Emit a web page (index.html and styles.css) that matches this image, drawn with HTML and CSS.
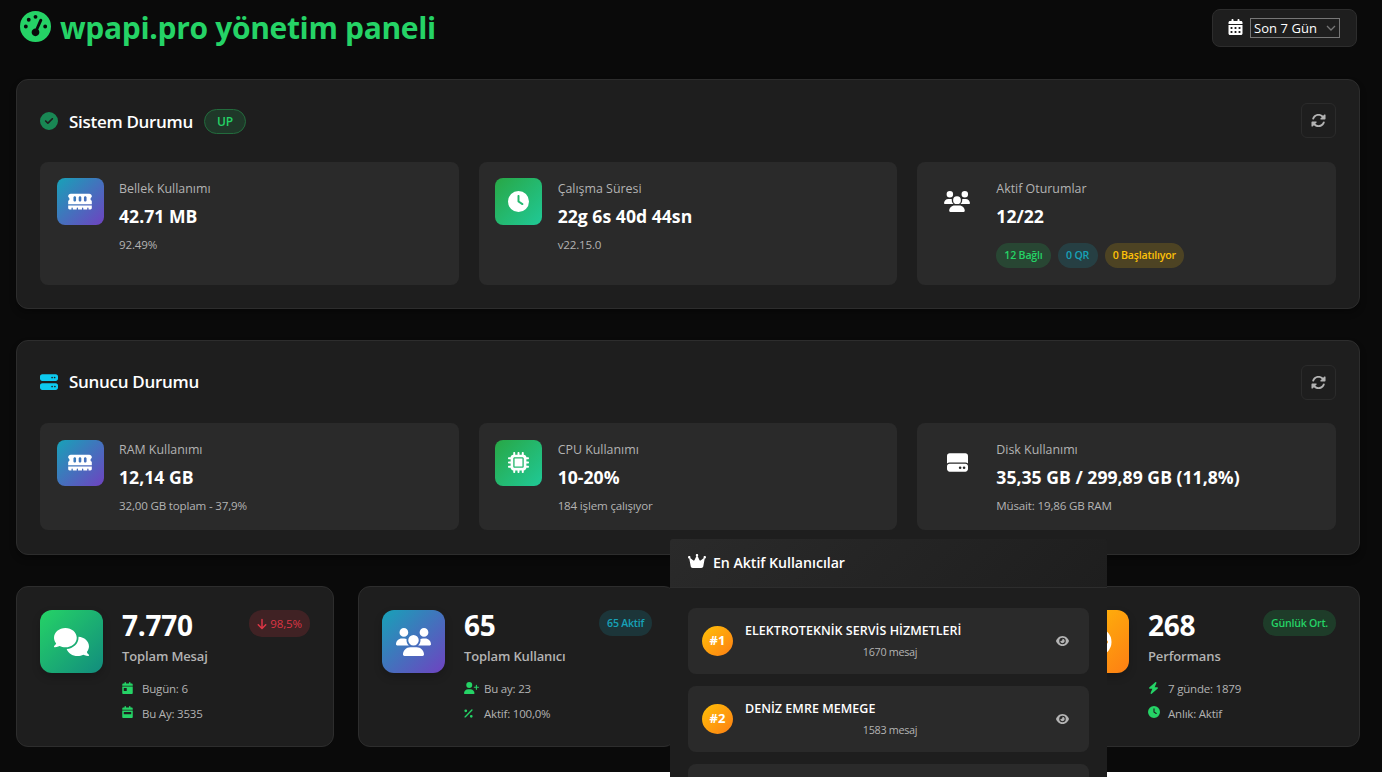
FILE: index.html
```
<!DOCTYPE html>
<html lang="tr">
<head>
<meta charset="utf-8">
<title>wpapi.pro yönetim paneli</title>
<link rel="stylesheet" href="styles.css">
</head>
<body>
<svg class="sprite" aria-hidden="true">
  <symbol id="gauge" viewBox="0 0 512 512"><path d="M0 256a256 256 0 1 1 512 0A256 256 0 1 1 0 256zM288 96a32 32 0 1 0 -64 0 32 32 0 1 0 64 0zM256 416c35.3 0 64-28.7 64-64c0-17.4-6.9-33.1-18.1-44.6L366 161.7c5.3-12.1-.2-26.3-12.3-31.6s-26.3 .2-31.6 12.3L257.9 288c-.6 0-1.3 0-1.9 0c-35.3 0-64 28.7-64 64s28.7 64 64 64zM176 144a32 32 0 1 0 -64 0 32 32 0 1 0 64 0zM96 288a32 32 0 1 0 0-64 32 32 0 1 0 0 64zm352-32a32 32 0 1 0 -64 0 32 32 0 1 0 64 0z"/></symbol>
  <symbol id="calendar" viewBox="0 0 448 512"><path d="M128 0c17.7 0 32 14.3 32 32V64H288V32c0-17.7 14.3-32 32-32s32 14.3 32 32V64h48c26.5 0 48 21.5 48 48v48H0V112C0 85.5 21.5 64 48 64H96V32c0-17.7 14.3-32 32-32zM0 192H448V464c0 26.5-21.5 48-48 48H48c-26.5 0-48-21.5-48-48V192zm64 80v32c0 8.8 7.2 16 16 16h32c8.8 0 16-7.2 16-16V272c0-8.8-7.2-16-16-16H80c-8.8 0-16 7.2-16 16zm128 0v32c0 8.8 7.2 16 16 16h32c8.8 0 16-7.2 16-16V272c0-8.8-7.2-16-16-16H208c-8.8 0-16 7.2-16 16zm144-16c-8.8 0-16 7.2-16 16v32c0 8.8 7.2 16 16 16h32c8.8 0 16-7.2 16-16V272c0-8.8-7.2-16-16-16H336zM64 400v32c0 8.8 7.2 16 16 16h32c8.8 0 16-7.2 16-16V400c0-8.8-7.2-16-16-16H80c-8.8 0-16 7.2-16 16zm144-16c-8.8 0-16 7.2-16 16v32c0 8.8 7.2 16 16 16h32c8.8 0 16-7.2 16-16V400c0-8.8-7.2-16-16-16H208zm112 16v32c0 8.8 7.2 16 16 16h32c8.8 0 16-7.2 16-16V400c0-8.8-7.2-16-16-16H336c-8.8 0-16 7.2-16 16z"/></symbol>
  <symbol id="calendar-day" viewBox="0 0 448 512"><path d="M128 0c17.7 0 32 14.3 32 32V64H288V32c0-17.7 14.3-32 32-32s32 14.3 32 32V64h48c26.5 0 48 21.5 48 48v48H0V112C0 85.5 21.5 64 48 64H96V32c0-17.7 14.3-32 32-32zM0 192H448V464c0 26.5-21.5 48-48 48H48c-26.5 0-48-21.5-48-48V192zm80 64c-8.8 0-16 7.2-16 16v96c0 8.8 7.2 16 16 16h96c8.8 0 16-7.2 16-16V272c0-8.8-7.2-16-16-16H80z"/></symbol>
  <symbol id="calendar-week" viewBox="0 0 448 512"><path d="M128 0c17.7 0 32 14.3 32 32V64H288V32c0-17.7 14.3-32 32-32s32 14.3 32 32V64h48c26.5 0 48 21.5 48 48v48H0V112C0 85.5 21.5 64 48 64H96V32c0-17.7 14.3-32 32-32zM0 192H448V464c0 26.5-21.5 48-48 48H48c-26.5 0-48-21.5-48-48V192zm80 64c-8.8 0-16 7.2-16 16v64c0 8.8 7.2 16 16 16H368c8.8 0 16-7.2 16-16V272c0-8.8-7.2-16-16-16H80z"/></symbol>
  <symbol id="check" viewBox="0 0 512 512"><path d="M256 512A256 256 0 1 0 256 0a256 256 0 1 0 0 512zM369 209L241 337c-9.4 9.4-24.6 9.4-33.9 0l-64-64c-9.4-9.4-9.4-24.6 0-33.9s24.6-9.4 33.9 0l47 47L335 175c9.4-9.4 24.6-9.4 33.9 0s9.4 24.6 0 33.9z"/></symbol>
  <symbol id="rotate" viewBox="0 0 512 512"><path d="M142.9 142.9c62.2-62.2 162.7-62.5 225.3-1L327 183c-6.9 6.9-8.9 17.2-5.2 26.2s12.5 14.8 22.2 14.8H472c13.3 0 24-10.7 24-24V72c0-9.7-5.8-18.5-14.8-22.2s-19.3-1.7-26.2 5.2L413.4 96.6c-87.6-86.5-228.7-86.2-315.8 1C73.2 122 55.6 150.7 44.8 181.4c-5.9 16.7 2.9 34.9 19.5 40.8s34.9-2.9 40.8-19.5c7.7-21.8 20.2-42.3 37.8-59.8zM16 312v128c0 9.7 5.8 18.5 14.8 22.2s19.3 1.7 26.2-5.2l41.6-41.6c87.6 86.5 228.7 86.2 315.8-1c24.4-24.4 42.1-53.1 52.9-83.7c5.9-16.7-2.9-34.9-19.5-40.8s-34.9 2.9-40.8 19.5c-7.7 21.8-20.2 42.3-37.8 59.8c-62.2 62.2-162.7 62.5-225.3 1L185 329c6.9-6.9 8.9-17.2 5.2-26.2s-12.5-14.8-22.2-14.8H40c-13.3 0-24 10.7-24 24z"/></symbol>
  <symbol id="memory" viewBox="0 0 576 512"><path d="M64 64C28.7 64 0 92.7 0 128v7.4c0 6.8 4.4 12.6 10.1 16.3C23.3 160.3 32 175.1 32 192s-8.7 31.7-21.9 40.3C4.4 236 0 241.8 0 248.6V320H576V248.6c0-6.8-4.4-12.6-10.1-16.3C552.7 223.7 544 208.9 544 192s8.7-31.7 21.9-40.3c5.7-3.7 10.1-9.5 10.1-16.3V128c0-35.3-28.7-64-64-64H64zM576 352H0v64c0 17.7 14.3 32 32 32H80V416c0-8.8 7.2-16 16-16s16 7.2 16 16v32h96V416c0-8.8 7.2-16 16-16s16 7.2 16 16v32h96V416c0-8.8 7.2-16 16-16s16 7.2 16 16v32h96V416c0-8.8 7.2-16 16-16s16 7.2 16 16v32h48c17.7 0 32-14.3 32-32V352zM192 160v64c0 17.7-14.3 32-32 32s-32-14.3-32-32V160c0-17.7 14.3-32 32-32s32 14.3 32 32zm128 0v64c0 17.7-14.3 32-32 32s-32-14.3-32-32V160c0-17.7 14.3-32 32-32s32 14.3 32 32zm128 0v64c0 17.7-14.3 32-32 32s-32-14.3-32-32V160c0-17.7 14.3-32 32-32s32 14.3 32 32z"/></symbol>
  <symbol id="clock" viewBox="0 0 512 512"><path d="M256 0a256 256 0 1 1 0 512A256 256 0 1 1 256 0zM232 120V256c0 8 4 15.5 10.7 20l96 64c11 7.4 25.9 4.4 33.3-6.7s4.4-25.9-6.7-33.3L280 243.2V120c0-13.3-10.7-24-24-24s-24 10.7-24 24z"/></symbol>
  <symbol id="users" viewBox="0 0 640 512"><path d="M144 0a80 80 0 1 1 0 160A80 80 0 1 1 144 0zM512 0a80 80 0 1 1 0 160A80 80 0 1 1 512 0zM0 298.7C0 239.8 47.8 192 106.7 192h42.7c15.9 0 31 3.5 44.6 9.7c-1.3 7.2-1.9 14.7-1.9 22.3c0 38.2 16.8 72.5 43.3 96c-.2 0-.4 0-.7 0H21.3C9.6 320 0 310.4 0 298.7zM405.3 320c-.2 0-.4 0-.7 0c26.6-23.5 43.3-57.8 43.3-96c0-7.6-.7-15-1.9-22.3c13.6-6.3 28.7-9.7 44.6-9.7h42.7C592.2 192 640 239.8 640 298.7c0 11.8-9.6 21.3-21.3 21.3H405.3zM224 224a96 96 0 1 1 192 0 96 96 0 1 1 -192 0zM128 485.3C128 411.7 187.7 352 261.3 352H378.7C452.3 352 512 411.7 512 485.3c0 14.7-11.9 26.7-26.7 26.7H154.7c-14.7 0-26.7-11.9-26.7-26.7z"/></symbol>
  <symbol id="server" viewBox="0 0 512 512"><path d="M64 32C28.7 32 0 60.7 0 96v64c0 35.3 28.7 64 64 64H448c35.3 0 64-28.7 64-64V96c0-35.3-28.7-64-64-64H64zm280 72a24 24 0 1 1 0 48 24 24 0 1 1 0-48zm48 24a24 24 0 1 1 48 0 24 24 0 1 1 -48 0zM64 288c-35.3 0-64 28.7-64 64v64c0 35.3 28.7 64 64 64H448c35.3 0 64-28.7 64-64V352c0-35.3-28.7-64-64-64H64zm280 72a24 24 0 1 1 0 48 24 24 0 1 1 0-48zm56 24a24 24 0 1 1 48 0 24 24 0 1 1 -48 0z"/></symbol>
  <symbol id="chip" viewBox="0 0 512 512"><path d="M176 24c0-13.3-10.7-24-24-24s-24 10.7-24 24V64c-35.3 0-64 28.7-64 64H24c-13.3 0-24 10.7-24 24s10.7 24 24 24H64v56H24c-13.3 0-24 10.7-24 24s10.7 24 24 24H64v56H24c-13.3 0-24 10.7-24 24s10.7 24 24 24H64c0 35.3 28.7 64 64 64v40c0 13.3 10.7 24 24 24s24-10.7 24-24V448h56v40c0 13.3 10.7 24 24 24s24-10.7 24-24V448h56v40c0 13.3 10.7 24 24 24s24-10.7 24-24V448c35.3 0 64-28.7 64-64h40c13.3 0 24-10.7 24-24s-10.7-24-24-24H448V280h40c13.3 0 24-10.7 24-24s-10.7-24-24-24H448V176h40c13.3 0 24-10.7 24-24s-10.7-24-24-24H448c0-35.3-28.7-64-64-64V24c0-13.3-10.7-24-24-24s-24 10.7-24 24V64H280V24c0-13.3-10.7-24-24-24s-24 10.7-24 24V64H176V24zM160 128H352c17.7 0 32 14.3 32 32V352c0 17.7-14.3 32-32 32H160c-17.7 0-32-14.3-32-32V160c0-17.7 14.3-32 32-32zm192 32H160V352H352V160z"/></symbol>
  <symbol id="disk" viewBox="0 0 512 512"><path d="M0 96C0 60.7 28.7 32 64 32H448c35.3 0 64 28.7 64 64V280.4c-17-15.2-39.4-24.4-64-24.4H64c-24.6 0-47 9.2-64 24.4V96zM64 288H448c35.3 0 64 28.7 64 64v64c0 35.3-28.7 64-64 64H64c-35.3 0-64-28.7-64-64V352c0-35.3 28.7-64 64-64zM320 416a32 32 0 1 0 0-64 32 32 0 1 0 0 64zm128-32a32 32 0 1 0 -64 0 32 32 0 1 0 64 0z"/></symbol>
  <symbol id="comments" viewBox="0 0 640 512"><path d="M208 352c114.9 0 208-78.8 208-176S322.9 0 208 0S0 78.8 0 176c0 38.6 14.7 74.3 39.6 103.4c-3.5 9.4-8.7 17.7-14.2 24.7c-4.8 6.2-9.7 11-13.3 14.3c-1.8 1.6-3.3 2.9-4.3 3.7c-.5 .4-.9 .7-1.1 .8l-.2 .2C1 327.2-1.4 334.4 .8 340.9S9.1 352 16 352c21.8 0 43.8-5.6 62.1-12.5c9.2-3.5 17.8-7.4 25.2-11.4C134.1 343.3 169.8 352 208 352zM448 176c0 112.3-99.1 196.9-216.5 207C255.8 457.4 336.4 512 432 512c38.2 0 73.9-8.7 104.7-23.9c7.5 4 16 7.9 25.2 11.4c18.3 6.9 40.3 12.5 62.1 12.5c6.9 0 13.1-4.5 15.2-11.1c2.1-6.6-.2-13.8-5.8-17.9l-.2-.2c-.2-.2-.6-.4-1.1-.8c-1-.8-2.5-2-4.3-3.7c-3.6-3.3-8.5-8.1-13.3-14.3c-5.5-7-10.7-15.4-14.2-24.7c24.9-29 39.6-64.7 39.6-103.4c0-92.8-84.9-168.9-192.6-175.5c.4 5.1 .6 10.3 .6 15.5z"/></symbol>
  <symbol id="user-plus" viewBox="0 0 640 512"><path d="M96 128a128 128 0 1 1 256 0A128 128 0 1 1 96 128zM0 482.3C0 383.8 79.8 304 178.3 304h91.4C368.2 304 448 383.8 448 482.3c0 16.4-13.3 29.7-29.7 29.7H29.7C13.3 512 0 498.7 0 482.3zM504 312V248H440c-13.3 0-24-10.7-24-24s10.7-24 24-24h64V136c0-13.3 10.7-24 24-24s24 10.7 24 24v64h64c13.3 0 24 10.7 24 24s-10.7 24-24 24H552v64c0 13.3-10.7 24-24 24s-24-10.7-24-24z"/></symbol>
  <symbol id="percent" viewBox="0 0 384 512"><path d="M374.6 118.6c12.5-12.5 12.5-32.8 0-45.3s-32.8-12.5-45.3 0l-320 320c-12.5 12.5-12.5 32.8 0 45.3s32.8 12.5 45.3 0l320-320zM128 128A64 64 0 1 0 0 128a64 64 0 1 0 128 0zM384 384a64 64 0 1 0 -128 0 64 64 0 1 0 128 0z"/></symbol>
  <symbol id="bolt" viewBox="0 0 448 512"><path d="M349.4 44.6c5.9-13.7 1.5-29.7-10.6-38.5s-28.6-8-39.9 1.8l-256 224c-10 8.8-13.6 22.9-8.9 35.3S50.7 288 64 288H175.5L98.6 467.4c-5.9 13.7-1.5 29.7 10.6 38.5s28.6 8 39.9-1.8l256-224c10-8.8 13.6-22.9 8.9-35.3s-16.6-20.7-30-20.7H272.5L349.4 44.6z"/></symbol>
  <symbol id="crown" viewBox="0 0 576 512"><path d="M309 106c11.4-7 19-19.7 19-34c0-22.1-17.9-40-40-40s-40 17.9-40 40c0 14.4 7.6 27 19 34L209.7 220.6c-9.1 18.2-32.7 23.4-48.6 10.7L72 160c5-6.7 8-15 8-24c0-22.1-17.9-40-40-40S0 113.9 0 136s17.9 40 40 40c.2 0 .5 0 .7 0L86.4 427.4c5.5 30.4 32 52.6 63 52.6H426.6c30.9 0 57.4-22.1 63-52.6L535.3 176c.2 0 .5 0 .7 0c22.1 0 40-17.9 40-40s-17.9-40-40-40s-40 17.9-40 40c0 9 3 17.3 8 24l-89.1 71.3c-15.9 12.7-39.5 7.5-48.6-10.7L309 106z"/></symbol>
  <symbol id="eye" viewBox="0 0 576 512"><path d="M288 32c-80.8 0-145.5 36.8-192.6 80.6C48.6 156 17.3 208 2.5 243.7c-3.3 7.9-3.3 16.7 0 24.6C17.3 304 48.6 356 95.4 399.4C142.5 443.2 207.2 480 288 480s145.5-36.8 192.6-80.6c46.8-43.5 78.1-95.4 93-131.1c3.3-7.9 3.3-16.7 0-24.6c-14.9-35.7-46.2-87.7-93-131.1C433.5 68.8 368.8 32 288 32zM144 256a144 144 0 1 1 288 0 144 144 0 1 1 -288 0zm144-64c0 35.3-28.7 64-64 64c-7.1 0-13.9-1.2-20.3-3.3c-5.5-1.8-11.9 1.6-11.7 7.4c.3 6.9 1.3 13.8 3.2 20.7c13.7 51.2 66.4 81.6 117.6 67.9s81.6-66.4 67.9-117.6c-11.1-41.5-47.8-69.4-88.6-71.1c-5.8-.2-9.2 6.1-7.4 11.7c2.1 6.4 3.3 13.2 3.3 20.3z"/></symbol>
  <symbol id="arrow-down" viewBox="0 0 384 512"><path d="M169.4 470.6c12.5 12.5 32.8 12.5 45.3 0l160-160c12.5-12.5 12.5-32.8 0-45.3s-32.8-12.5-45.3 0L224 370.8V64c0-17.7-14.3-32-32-32s-32 14.3-32 32v306.7L54.6 265.4c-12.5-12.5-32.8-12.5-45.3 0s-12.5 32.8 0 45.3l160 160z"/></symbol>
</svg>

<div class="screen">
  <main class="dashboard">
    <header class="topbar">
      <h1 class="brand"><svg class="brand-icon"><use href="#gauge"/></svg><span>wpapi.pro yönetim paneli</span></h1>
      <div class="period">
        <svg class="period-icon"><use href="#calendar"/></svg>
        <div class="select"><span>Son 7 Gün</span><svg class="chevron" viewBox="0 0 10 6"><path d="M1 1l4 4 4-4"/></svg></div>
      </div>
    </header>

    <section class="panel system">
      <div class="panel-head">
        <svg class="head-icon ok"><use href="#check"/></svg>
        <h2>Sistem Durumu</h2>
        <span class="state">UP</span>
        <button class="refresh"><svg><use href="#rotate"/></svg></button>
      </div>
      <div class="metrics">
        <article class="metric">
          <div class="tile blue"><svg class="wide"><use href="#memory"/></svg></div>
          <div class="info"><div class="label">Bellek Kullanımı</div><div class="value">42.71 MB</div><div class="sub">92.49%</div></div>
        </article>
        <article class="metric">
          <div class="tile green"><svg><use href="#clock"/></svg></div>
          <div class="info"><div class="label">Çalışma Süresi</div><div class="value">22g 6s 40d 44sn</div><div class="sub">v22.15.0</div></div>
        </article>
        <article class="metric">
          <div class="tile"><svg class="people"><use href="#users"/></svg></div>
          <div class="info"><div class="label">Aktif Oturumlar</div><div class="value">12/22</div>
            <div class="pills"><span class="pill success">12 Bağlı</span><span class="pill info-pill">0 QR</span><span class="pill warning">0 Başlatılıyor</span></div></div>
        </article>
      </div>
    </section>

    <section class="panel server">
      <div class="panel-head">
        <svg class="head-icon cyan"><use href="#server"/></svg>
        <h2>Sunucu Durumu</h2>
        <button class="refresh"><svg><use href="#rotate"/></svg></button>
      </div>
      <div class="metrics">
        <article class="metric">
          <div class="tile blue"><svg class="wide"><use href="#memory"/></svg></div>
          <div class="info"><div class="label">RAM Kullanımı</div><div class="value">12,14 GB</div><div class="sub">32,00 GB toplam - 37,9%</div></div>
        </article>
        <article class="metric">
          <div class="tile green"><svg><use href="#chip"/></svg></div>
          <div class="info"><div class="label">CPU Kullanımı</div><div class="value">10-20%</div><div class="sub">184 işlem çalışıyor</div></div>
        </article>
        <article class="metric">
          <div class="tile"><svg><use href="#disk"/></svg></div>
          <div class="info"><div class="label">Disk Kullanımı</div><div class="value">35,35 GB / 299,89 GB (11,8%)</div><div class="sub">Müsait: 19,86 GB RAM</div></div>
        </article>
      </div>
    </section>

    <section class="stats">
      <article class="stat">
        <div class="stat-icon message"><svg><use href="#comments"/></svg></div>
        <div class="stat-body">
          <div class="number">7.770</div><div class="caption">Toplam Mesaj</div>
          <div class="detail"><span class="mark"><svg class="i11"><use href="#calendar-day"/></svg></span>Bugün: 6</div>
          <div class="detail"><span class="mark"><svg class="i11"><use href="#calendar-week"/></svg></span>Bu Ay: 3535</div>
        </div>
        <span class="badge danger"><svg><use href="#arrow-down"/></svg>98,5%</span>
      </article>
      <article class="stat">
        <div class="stat-icon people-bg"><svg><use href="#users"/></svg></div>
        <div class="stat-body">
          <div class="number">65</div><div class="caption">Toplam Kullanıcı</div>
          <div class="detail"><span class="mark"><svg class="i15"><use href="#user-plus"/></svg></span>Bu ay: 23</div>
          <div class="detail"><span class="mark"><svg class="i9"><use href="#percent"/></svg></span>Aktif: 100,0%</div>
        </div>
        <span class="badge info-pill">65 Aktif</span>
      </article>
      <article class="stat"></article>
      <article class="stat">
        <div class="stat-icon speed"><svg><use href="#gauge"/></svg></div>
        <div class="stat-body">
          <div class="number">268</div><div class="caption">Performans</div>
          <div class="detail"><span class="mark"><svg class="i11"><use href="#bolt"/></svg></span>7 günde: 1879</div>
          <div class="detail"><span class="mark"><svg class="i12"><use href="#clock"/></svg></span>Anlık: Aktif</div>
        </div>
        <span class="badge success">Günlük Ort.</span>
      </article>
    </section>
  </main>

  <aside class="ranking">
    <div class="ranking-head"><svg><use href="#crown"/></svg><h3>En Aktif Kullanıcılar</h3></div>
    <div class="ranking-list">
      <div class="rank"><span class="place">#1</span><div class="who"><div class="name">ELEKTROTEKNİK SERVİS HİZMETLERİ</div><div class="count">1670 mesaj</div></div><svg class="eye"><use href="#eye"/></svg></div>
      <div class="rank"><span class="place">#2</span><div class="who"><div class="name">DENİZ EMRE MEMEGE</div><div class="count">1583 mesaj</div></div><svg class="eye"><use href="#eye"/></svg></div>
      <div class="rank"></div>
    </div>
  </aside>
</div>
</body>
</html>
```
FILE: styles.css
```
* { box-sizing: border-box; }
body { margin: 0; background: #fff; color: #fff; font-family: "Open Sans", "Noto Sans", sans-serif; overflow: hidden; }
h1, h2, h3 { margin: 0; }
svg { display: block; fill: currentColor; fill-rule: evenodd; flex: none; }
.sprite { display: none; }

.screen { position: relative; height: 777px; overflow: hidden; }
.dashboard { height: 772px; padding: 9px 22px 0 16px; background: #0a0a0a; }

.topbar { display: flex; justify-content: space-between; align-items: flex-start; height: 70px; padding: 0 3px 0 4px; }
.brand { display: flex; gap: 9px; color: #25d366; font-size: 30px; font-weight: 700; line-height: 37px; letter-spacing: -0.33px; }
.brand-icon { width: 31px; height: 31px; margin-top: 2px; }
.period { display: flex; align-items: center; gap: 7px; width: 145px; height: 38px; padding: 0 0 0 15px; border: 1px solid #2d2d2d; border-radius: 8px; background: #1e1e1e; }
.period-icon { width: 15px; height: 16px; margin-top: -2px; }
.select { display: flex; align-items: center; justify-content: space-between; width: 90px; height: 20px; padding: 0 3px; border: 1px solid #767676; font-size: 13px; letter-spacing: 0.05px; line-height: 18px; white-space: nowrap; }
.chevron { width: 10px; height: 6px; margin-top: -1px; fill: none; stroke: #767676; stroke-width: 1.3; }

.panel { border: 1px solid #2d2d2d; border-radius: 12px; background: #1e1e1e; box-shadow: 0 4px 6px rgba(0, 0, 0, .3); padding: 23px; }
.system { height: 230px; }
.server { height: 215px; margin-top: 31px; padding-top: 24px; }
.panel-head { display: flex; align-items: center; height: 35px; }
.head-icon { width: 18px; height: 18px; margin-right: 11px; }
.ok { color: #198754; }
.cyan { margin-top: -1px; color: #0dcaf0; }
.panel-head h2 { font-size: 17px; font-weight: 600; line-height: 24px; letter-spacing: -0.3px; }
.system h2 { padding-top: 2px; }
.server h2 { padding-bottom: 1px; }
.state { width: 42px; height: 25px; margin: 2px 0 0 11px; border: 1px solid #236b3d; border-radius: 13px; background: #1f3829; color: #25d366; font-size: 12px; font-weight: 600; line-height: 23px; text-align: center; }
.refresh { display: grid; place-items: center; width: 35px; height: 35px; margin-left: auto; padding: 0; border: 1px solid #2b2b2b; border-radius: 6px; background: none; color: #b3b3b3; }
.refresh svg { width: 15px; height: 15px; }

.metrics { display: grid; grid-template-columns: repeat(3, 1fr); gap: 20px; margin-top: 24px; }
.server .metrics { margin-top: 23px; }
.metric { display: flex; gap: 15px; height: 123px; padding: 16px 17px; border-radius: 8px; background: #2a2a2a; }
.server .metric { height: 107px; padding-top: 17px; }
.metric + .metric { gap: 16px; padding-left: 16px; }
.tile { display: grid; place-items: center; width: 47px; height: 47px; border-radius: 8px; }
.server .tile { height: 46px; }
.tile svg { width: 21px; height: 21px; }
.metric:last-child .tile svg { margin-left: 1px; }
.tile svg.wide { width: 24px; height: 21px; margin-right: 1px; }
.server .tile svg { margin-top: -1px; }
.tile svg.people { width: 26px; height: 21px; }
.blue { background: linear-gradient(135deg, #17a2b8, #6f42c1); }
.green { background: linear-gradient(135deg, #28a745, #20c997); }
.label { padding-top: 1px; color: #b3b3b3; font-size: 12.4px; font-weight: 500; line-height: 20px; letter-spacing: 0; }
.value { margin-top: 4px; font-size: 17.6px; font-weight: 700; line-height: 26px; letter-spacing: 0.02px; white-space: nowrap; }
.sub { margin-top: 7px; color: #b3b3b3; font-size: 11.6px; line-height: 18px; letter-spacing: -0.18px; }
.server .label { margin-top: -1px; }

.pills { display: flex; gap: 7px; margin-top: 14px; }
.pill { height: 25px; padding: 0 8px; border-radius: 12.5px; font-size: 10.6px; font-weight: 600; line-height: 24px; letter-spacing: -0.2px; white-space: nowrap; }
.pill.info-pill { padding: 0 8.5px; }
.success { background: rgba(37, 211, 102, .17); color: #25d366; }
.info-pill { background: rgba(23, 162, 184, .18); color: #17a2b8; }
.warning { background: rgba(255, 193, 7, .17); color: #ffc107; }
.danger { background: rgba(220, 53, 69, .18); color: #dc3545; }

.stats { display: grid; grid-template-columns: repeat(4, 1fr); gap: 24px; margin-top: 31px; }
.stat { display: flex; align-items: flex-start; height: 161px; padding: 23px; border: 1px solid #2d2d2d; border-radius: 12px; background: #1e1e1e; }
.stat-icon { display: grid; place-items: center; width: 63px; height: 63px; border-radius: 12px; box-shadow: 0 4px 8px rgba(0, 0, 0, .2); }
.stat-icon svg { width: 35px; height: 28px; }
.message { background: linear-gradient(135deg, #25d366, #128c7e); }
.people-bg { background: linear-gradient(135deg, #17a2b8, #6f42c1); }
.speed { background: linear-gradient(135deg, #ffc107, #fd7e14); }
.stat-body { flex: 1; margin-left: 19px; }
.number { height: 30px; font-size: 28px; font-weight: 700; line-height: 30px; letter-spacing: -0.25px; }
.caption { height: 20px; margin-top: 6px; color: #b3b3b3; font-size: 13px; font-weight: 600; line-height: 20px; letter-spacing: -0.13px; }
.detail { display: flex; align-items: center; height: 24px; color: #b3b3b3; font-size: 11.5px; letter-spacing: -0.2px; white-space: nowrap; }
.caption + .detail { height: 25px; margin-top: 10px; }
.mark { width: 20px; color: #25d366; }
.mark svg { height: 12px; margin-top: -2px; }
.mark svg.i9 { height: 11px; margin-top: 0; }
.i9 { width: 9px; }
.i11 { width: 11px; }
.i12 { width: 12px; }
.i15 { width: 15px; }
.badge { display: flex; align-items: center; gap: 3px; height: 26px; padding: 0 8px; border-radius: 13px; font-size: 10.6px; font-weight: 600; letter-spacing: -0.25px; white-space: nowrap; }
.badge.danger { height: 27px; font-size: 11.5px; font-weight: 500; letter-spacing: -0.1px; }
.badge svg { width: 10px; height: 12px; }

.ranking { position: absolute; left: 670px; top: 539px; width: 437px; height: 238px; border-radius: 3px 3px 0 0; background: #1e1e1e; overflow: hidden; }
.ranking-head { display: flex; align-items: center; gap: 7px; height: 49px; padding: 0 18px 2px; border-bottom: 1px solid #2d2d2d; background: linear-gradient(135deg, #2a2a2a, #1e1e1e); }
.ranking-head svg { width: 18px; height: 16px; margin-top: -2px; }
.ranking-head h3 { font-size: 14.2px; font-weight: 600; letter-spacing: -0.05px; }
.ranking-list { display: flex; flex-direction: column; gap: 12px; padding: 20px 18px 0; }
.rank { display: flex; flex: none; align-items: center; height: 66px; padding: 0 20px 0 14px; border-radius: 8px; background: #2a2a2a; }
.place { width: 31px; height: 30px; border-radius: 50%; background: linear-gradient(135deg, #ffc107, #fd7e14); font-size: 13px; font-weight: 700; line-height: 29px; text-align: center; }
.who { flex: 1; margin: 0 21px 0 12px; }
.name { padding-top: 1px; font-size: 12.5px; font-weight: 600; line-height: 20px; letter-spacing: 0.03px; }
.count { margin-top: 1px; color: #b3b3b3; font-size: 10.8px; line-height: 20px; letter-spacing: -0.3px; text-align: center; }
.eye { width: 13px; height: 12px; color: #b3b3b3; }
```
